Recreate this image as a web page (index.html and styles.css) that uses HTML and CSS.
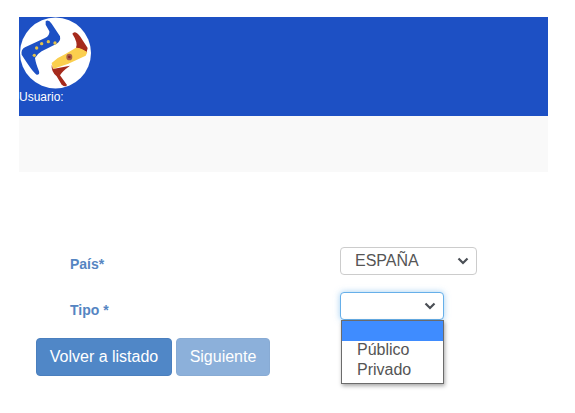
FILE: index.html
```html
<!DOCTYPE html>
<html lang="es">
<head>
<meta charset="utf-8">
<title>Alta</title>
<link rel="stylesheet" href="styles.css">
</head>
<body>
<header class="banner">
  <svg class="logo" width="72" height="72" viewBox="0 0 72 72">
    <circle cx="35.500" cy="36" r="35.500" fill="#fff"/>
    <g transform="translate(-5 -4) scale(.3333)">
      <path d="M92 25 Q100 18 110 32 L135 70 Q138 85 125 92 L80 115 Q68 122 60 135 Q62 150 72 175 Q75 186 65 185 Q55 180 20 125 Q17 110 30 103 L90 75 Q105 68 103 55 L92 35 Z" fill="#1d50c4"/>
      <g fill="#e5c34a">
        <circle cx="65" cy="105" r="5"/><circle cx="80" cy="92" r="5"/><circle cx="100" cy="86" r="5"/><circle cx="120" cy="90" r="5"/><circle cx="58" cy="127" r="5"/>
      </g>
      <path d="M172 62 Q180 50 195 70 L218 105 L215 118 Q200 106 183 104 Q190 90 172 62 Z" fill="#a52a1c"/>
      <path d="M110 150 Q130 132 150 124 L183 104 Q200 104 217 118 L212 128 L160 152 L114 168 Z" fill="#fbcf4e"/>
      <path d="M110 155 Q108 175 125 190 L140 215 Q152 224 156 216 L135 187 Q140 176 165 158 L114 168 Z" fill="#a52a1c"/>
      <ellipse cx="163" cy="132" rx="9" ry="10" fill="#a8604a"/>
      <circle cx="163" cy="132" r="4" fill="#8a2a2a"/>
    </g>
  </svg>
  <span class="user">Usuario:</span>
</header>
<div class="band"></div>
<form class="form">
  <div class="row">
    <label class="label">País*</label>
    <div class="select wide">
      <span class="value">ESPAÑA</span>
      <svg class="chev" width="12" height="8" viewBox="0 0 12 8"><path d="M1.500 1.500 L6 6 L10.500 1.500" fill="none" stroke="#4a4f55" stroke-width="2.200"/></svg>
    </div>
  </div>
  <div class="row">
    <label class="label low">Tipo *</label>
    <div class="select narrow focus">
      <span class="value"></span>
      <svg class="chev" width="12" height="8" viewBox="0 0 12 8"><path d="M1.500 1.500 L6 6 L10.500 1.500" fill="none" stroke="#4a4f55" stroke-width="2.200"/></svg>
      <ul class="menu">
        <li class="opt active">&nbsp;</li>
        <li class="opt">Público</li>
        <li class="opt">Privado</li>
      </ul>
    </div>
  </div>
  <div class="actions">
    <button type="button" class="btn">Volver a listado</button>
    <button type="button" class="btn off">Siguiente</button>
  </div>
</form>
</body>
</html>
```

FILE: styles.css
```css
* { box-sizing: border-box; }
html, body { margin: 0; background: #fff; }
body {
  min-height: 100vh;
  padding: 17px 27px 0 19px;
  font-family: "Liberation Sans", Arial, sans-serif;
}
.banner {
  height: 99px;
  background: #1d50c4;
  display: flex;
  flex-direction: column;
  align-items: flex-start;
}
.logo { display: block; margin: 0 0 0 1px; flex: none; }
.user {
  color: #fff;
  font-size: 12px;
  line-height: 14px;
  margin-top: 1px;
}
.band { height: 56px; background: #f9f9f9; }
.form {
  margin-top: 75px;
  padding-left: 17px;
}
.row {
  display: flex;
  align-items: center;
  height: 28px;
  margin-bottom: 17px;
}
.row + .row { margin-bottom: 18px; }
.label {
  width: 304px;
  padding-left: 34px;
  padding-top: 6px;
  font-size: 14px;
  font-weight: 700;
  color: #5585c2;
}
.low { padding-top: 8px; }
.select {
  position: relative;
  height: 28px;
  border: 1px solid #ccc;
  border-radius: 4px;
  background: #fff;
  display: flex;
  align-items: center;
  justify-content: space-between;
  font-size: 16px;
  color: #555;
  padding: 0 7px 0 14px;
}
.wide { width: 137px; }
.narrow { width: 104px; }
.focus {
  border-color: #66afe9;
  box-shadow: 0 0 6px rgba(102, 175, 233, .6);
}
.menu {
  position: absolute;
  left: 0;
  top: 27px;
  width: 103px;
  height: 64px;
  margin: 0;
  padding: 0;
  list-style: none;
  background: #fff;
  border: 1px solid #6b6b6b;
  box-shadow: 1px 2px 4px rgba(0, 0, 0, .35);
}
.opt {
  height: 20px;
  line-height: 18px;
  padding-left: 15px;
  font-size: 16px;
  color: #555;
}
.active { background: #3f8cff; }
.actions { display: flex; gap: 4px; }
.btn {
  height: 38px;
  width: 136px;
  padding: 0;
  border: 1px solid #4a7fbe;
  border-radius: 4px;
  background: #5087c7;
  color: #fff;
  font: 16px "Liberation Sans", Arial, sans-serif;
}
.off {
  width: 94px;
  opacity: .65;
}
```
